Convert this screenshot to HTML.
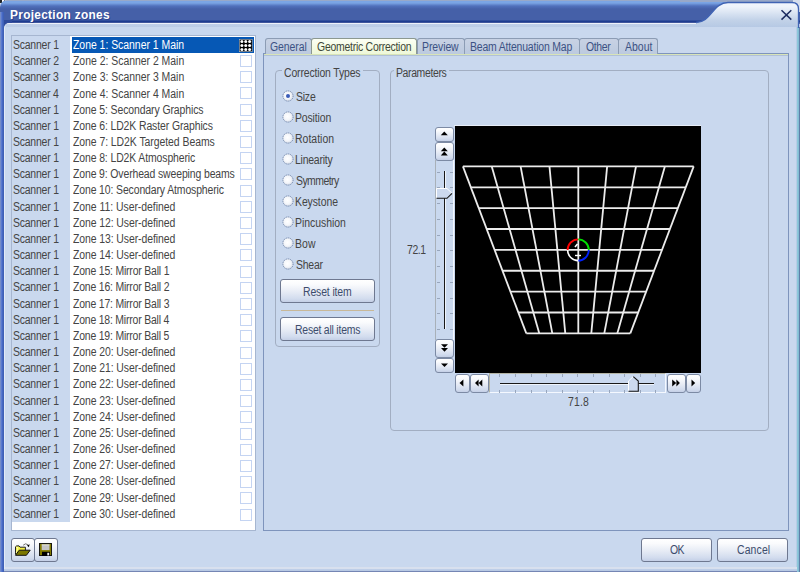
<!DOCTYPE html><html><head><meta charset="utf-8"><style>
*{margin:0;padding:0;box-sizing:border-box}
html,body{width:800px;height:572px;overflow:hidden;background:#c9d8ee}
body{position:relative;font-family:"Liberation Sans",sans-serif;font-size:11px;color:#222}
.a{position:absolute}
.t{position:absolute;white-space:nowrap;font-size:11px;line-height:13px}
.btn{position:absolute;border:1px solid #6e7890;border-radius:3px;background:linear-gradient(#ffffff 0%,#fafbfd 20%,#e6ebf5 55%,#d2dcee 85%,#c4cfe6 100%)}
.tab{position:absolute;top:38px;height:16px;border:1px solid #8c9cb4;border-bottom:none;border-radius:3px 3px 0 0;background:linear-gradient(#c8d2e4,#bccadf)}
.grp{position:absolute;border:1px solid #a2aec2;border-radius:4px}
.chk{position:absolute;width:12px;height:12px;border:1px solid #c4d4f2;background:#fff}
.radio{position:absolute;width:11px;height:11px;border-radius:50%;background:radial-gradient(circle at 65% 65%,#ffffff 0,#eef0f6 45%,#d0d6e2 100%);border:1px dashed #8090b0}
</style></head><body>
<div class="a" style="left:0;top:0;width:10px;height:10px;background:#dce4f2"></div>
<div class="a" style="left:0;top:0;width:1.5px;height:3px;background:#202428"></div>
<div class="a" style="left:1.5px;top:0;width:2px;height:6px;background:#ffffff"></div>
<div class="a" style="left:3.5px;top:0;width:1px;height:2px;background:#505860"></div>
<div class="a" style="left:0;top:0;width:800px;height:24px;background:linear-gradient(#98a8c8 0,#98a8c8 1px,#7aa4e4 1px,#7aa4e4 3px,#5070bc 6px,#4560a8 9px,#4560a8 20px,#1e3c90 21px,#1e3c90 22px,#6070a8 23px);border-top-left-radius:7px"></div>
<div class="a" style="left:0;top:12px;width:4px;height:560px;background:linear-gradient(90deg,#8090b8 0,#6888d8 1px,#4a6cc8 2px,#3a5cb0 4px)"></div>
<div class="a" style="left:4px;top:20px;width:8px;height:8px;background:#2e4a9c"></div>
<div class="a" style="left:4px;top:23px;width:793px;height:546px;background:#c9d8ee;border-top:1px solid #eef2fa;border-left:1px solid #e2eaf6;border-top-left-radius:5px"></div>
<div class="a" style="left:6px;top:24px;width:791px;height:3px;background:linear-gradient(#c0d0ea,#bccde6)"></div>
<div class="t" style="left:9.74px;top:9.07px;color:#fff;font-size:12.5px;font-weight:bold;transform:scaleX(0.9500);transform-origin:0 0;letter-spacing:0.318px;text-shadow:1px 1px 0 rgba(20,40,120,0.5);">Projection zones</div>
<div class="a" style="left:796px;top:27px;width:4px;height:545px;background:linear-gradient(90deg,#b8cce6 0,#b8cce6 1px,#8cc8da 1.5px,#84bcd4 2.5px,#6282aa 3.2px,#5a78a4 4px)"></div>
<div class="a" style="left:5px;top:567px;width:792px;height:2px;background:#d8e0ee"></div>
<div class="a" style="left:4px;top:569px;width:793px;height:3px;background:linear-gradient(#c0d0ea 0,#b8c9e4 1.5px,#8090b8 2px,#6a7cb0 3px)"></div>
<div class="a" style="left:11px;top:35px;width:245px;height:496px;border:1px solid #a6b6d0;background:#fff"></div>
<div class="a" style="left:12px;top:36px;width:58px;height:486px;background:#c9d8ee"></div>
<div class="a" style="left:72px;top:37px;width:182px;height:16px;background:#0658b5"></div>
<div class="t" style="left:13.48px;top:39.05px;color:#444;font-size:12px;font-weight:normal;transform:scaleX(0.8700);transform-origin:0 0;letter-spacing:-0.236px;">Scanner 1</div>
<div class="t" style="left:73.45px;top:39.05px;color:#fff;font-size:12px;font-weight:normal;transform:scaleX(0.8700);transform-origin:0 0;letter-spacing:-0.022px;">Zone 1: Scanner 1 Main</div>
<div class="t" style="left:13.48px;top:55.21px;color:#444;font-size:12px;font-weight:normal;transform:scaleX(0.8700);transform-origin:0 0;letter-spacing:-0.236px;">Scanner 2</div>
<div class="t" style="left:73.45px;top:55.21px;color:#444;font-size:12px;font-weight:normal;transform:scaleX(0.8700);transform-origin:0 0;letter-spacing:-0.011px;">Zone 2: Scanner 2 Main</div>
<div class="chk" style="left:240px;top:55.00px"></div>
<div class="t" style="left:13.48px;top:71.37px;color:#444;font-size:12px;font-weight:normal;transform:scaleX(0.8700);transform-origin:0 0;letter-spacing:-0.249px;">Scanner 3</div>
<div class="t" style="left:73.45px;top:71.37px;color:#444;font-size:12px;font-weight:normal;transform:scaleX(0.8700);transform-origin:0 0;letter-spacing:-0.011px;">Zone 3: Scanner 3 Main</div>
<div class="chk" style="left:240px;top:71.20px"></div>
<div class="t" style="left:13.48px;top:87.53px;color:#444;font-size:12px;font-weight:normal;transform:scaleX(0.8700);transform-origin:0 0;letter-spacing:-0.261px;">Scanner 4</div>
<div class="t" style="left:73.45px;top:87.53px;color:#444;font-size:12px;font-weight:normal;transform:scaleX(0.8700);transform-origin:0 0;letter-spacing:-0.011px;">Zone 4: Scanner 4 Main</div>
<div class="chk" style="left:240px;top:87.40px"></div>
<div class="t" style="left:13.48px;top:103.69px;color:#444;font-size:12px;font-weight:normal;transform:scaleX(0.8700);transform-origin:0 0;letter-spacing:-0.236px;">Scanner 1</div>
<div class="t" style="left:73.45px;top:103.69px;color:#444;font-size:12px;font-weight:normal;transform:scaleX(0.8700);transform-origin:0 0;letter-spacing:-0.108px;">Zone 5: Secondary Graphics</div>
<div class="chk" style="left:240px;top:103.60px"></div>
<div class="t" style="left:13.48px;top:119.85px;color:#444;font-size:12px;font-weight:normal;transform:scaleX(0.8700);transform-origin:0 0;letter-spacing:-0.236px;">Scanner 1</div>
<div class="t" style="left:73.45px;top:119.85px;color:#444;font-size:12px;font-weight:normal;transform:scaleX(0.8700);transform-origin:0 0;letter-spacing:-0.119px;">Zone 6: LD2K Raster Graphics</div>
<div class="chk" style="left:240px;top:119.80px"></div>
<div class="t" style="left:13.48px;top:136.01px;color:#444;font-size:12px;font-weight:normal;transform:scaleX(0.8700);transform-origin:0 0;letter-spacing:-0.236px;">Scanner 1</div>
<div class="t" style="left:73.45px;top:136.01px;color:#444;font-size:12px;font-weight:normal;transform:scaleX(0.8700);transform-origin:0 0;letter-spacing:-0.062px;">Zone 7: LD2K Targeted Beams</div>
<div class="chk" style="left:240px;top:136.00px"></div>
<div class="t" style="left:13.48px;top:152.17px;color:#444;font-size:12px;font-weight:normal;transform:scaleX(0.8700);transform-origin:0 0;letter-spacing:-0.236px;">Scanner 1</div>
<div class="t" style="left:73.45px;top:152.17px;color:#444;font-size:12px;font-weight:normal;transform:scaleX(0.8700);transform-origin:0 0;letter-spacing:-0.123px;">Zone 8: LD2K Atmospheric</div>
<div class="chk" style="left:240px;top:152.20px"></div>
<div class="t" style="left:13.48px;top:168.33px;color:#444;font-size:12px;font-weight:normal;transform:scaleX(0.8700);transform-origin:0 0;letter-spacing:-0.236px;">Scanner 1</div>
<div class="t" style="left:73.45px;top:168.33px;color:#444;font-size:12px;font-weight:normal;transform:scaleX(0.8700);transform-origin:0 0;letter-spacing:-0.138px;">Zone 9: Overhead sweeping beams</div>
<div class="chk" style="left:240px;top:168.40px"></div>
<div class="t" style="left:13.48px;top:184.49px;color:#444;font-size:12px;font-weight:normal;transform:scaleX(0.8700);transform-origin:0 0;letter-spacing:-0.236px;">Scanner 1</div>
<div class="t" style="left:73.45px;top:184.49px;color:#444;font-size:12px;font-weight:normal;transform:scaleX(0.8700);transform-origin:0 0;letter-spacing:-0.132px;">Zone 10: Secondary Atmospheric</div>
<div class="chk" style="left:240px;top:184.60px"></div>
<div class="t" style="left:13.48px;top:200.65px;color:#444;font-size:12px;font-weight:normal;transform:scaleX(0.8700);transform-origin:0 0;letter-spacing:-0.236px;">Scanner 1</div>
<div class="t" style="left:73.45px;top:200.65px;color:#444;font-size:12px;font-weight:normal;transform:scaleX(0.8700);transform-origin:0 0;letter-spacing:-0.049px;">Zone 11: User-defined</div>
<div class="chk" style="left:240px;top:200.80px"></div>
<div class="t" style="left:13.48px;top:216.81px;color:#444;font-size:12px;font-weight:normal;transform:scaleX(0.8700);transform-origin:0 0;letter-spacing:-0.236px;">Scanner 1</div>
<div class="t" style="left:73.45px;top:216.81px;color:#444;font-size:12px;font-weight:normal;transform:scaleX(0.8700);transform-origin:0 0;letter-spacing:-0.094px;">Zone 12: User-defined</div>
<div class="chk" style="left:240px;top:217.00px"></div>
<div class="t" style="left:13.48px;top:232.97px;color:#444;font-size:12px;font-weight:normal;transform:scaleX(0.8700);transform-origin:0 0;letter-spacing:-0.236px;">Scanner 1</div>
<div class="t" style="left:73.45px;top:232.97px;color:#444;font-size:12px;font-weight:normal;transform:scaleX(0.8700);transform-origin:0 0;letter-spacing:-0.094px;">Zone 13: User-defined</div>
<div class="chk" style="left:240px;top:233.20px"></div>
<div class="t" style="left:13.48px;top:249.13px;color:#444;font-size:12px;font-weight:normal;transform:scaleX(0.8700);transform-origin:0 0;letter-spacing:-0.236px;">Scanner 1</div>
<div class="t" style="left:73.45px;top:249.13px;color:#444;font-size:12px;font-weight:normal;transform:scaleX(0.8700);transform-origin:0 0;letter-spacing:-0.094px;">Zone 14: User-defined</div>
<div class="chk" style="left:240px;top:249.40px"></div>
<div class="t" style="left:13.48px;top:265.29px;color:#444;font-size:12px;font-weight:normal;transform:scaleX(0.8700);transform-origin:0 0;letter-spacing:-0.236px;">Scanner 1</div>
<div class="t" style="left:73.45px;top:265.29px;color:#444;font-size:12px;font-weight:normal;transform:scaleX(0.8700);transform-origin:0 0;letter-spacing:-0.215px;">Zone 15: Mirror Ball 1</div>
<div class="chk" style="left:240px;top:265.60px"></div>
<div class="t" style="left:13.48px;top:281.45px;color:#444;font-size:12px;font-weight:normal;transform:scaleX(0.8700);transform-origin:0 0;letter-spacing:-0.236px;">Scanner 1</div>
<div class="t" style="left:73.45px;top:281.45px;color:#444;font-size:12px;font-weight:normal;transform:scaleX(0.8700);transform-origin:0 0;letter-spacing:-0.215px;">Zone 16: Mirror Ball 2</div>
<div class="chk" style="left:240px;top:281.80px"></div>
<div class="t" style="left:13.48px;top:297.61px;color:#444;font-size:12px;font-weight:normal;transform:scaleX(0.8700);transform-origin:0 0;letter-spacing:-0.236px;">Scanner 1</div>
<div class="t" style="left:73.45px;top:297.61px;color:#444;font-size:12px;font-weight:normal;transform:scaleX(0.8700);transform-origin:0 0;letter-spacing:-0.215px;">Zone 17: Mirror Ball 3</div>
<div class="chk" style="left:240px;top:298.00px"></div>
<div class="t" style="left:13.48px;top:313.77px;color:#444;font-size:12px;font-weight:normal;transform:scaleX(0.8700);transform-origin:0 0;letter-spacing:-0.236px;">Scanner 1</div>
<div class="t" style="left:73.45px;top:313.77px;color:#444;font-size:12px;font-weight:normal;transform:scaleX(0.8700);transform-origin:0 0;letter-spacing:-0.225px;">Zone 18: Mirror Ball 4</div>
<div class="chk" style="left:240px;top:314.20px"></div>
<div class="t" style="left:13.48px;top:329.93px;color:#444;font-size:12px;font-weight:normal;transform:scaleX(0.8700);transform-origin:0 0;letter-spacing:-0.236px;">Scanner 1</div>
<div class="t" style="left:73.45px;top:329.93px;color:#444;font-size:12px;font-weight:normal;transform:scaleX(0.8700);transform-origin:0 0;letter-spacing:-0.220px;">Zone 19: Mirror Ball 5</div>
<div class="chk" style="left:240px;top:330.40px"></div>
<div class="t" style="left:13.48px;top:346.09px;color:#444;font-size:12px;font-weight:normal;transform:scaleX(0.8700);transform-origin:0 0;letter-spacing:-0.236px;">Scanner 1</div>
<div class="t" style="left:73.45px;top:346.09px;color:#444;font-size:12px;font-weight:normal;transform:scaleX(0.8700);transform-origin:0 0;letter-spacing:-0.094px;">Zone 20: User-defined</div>
<div class="chk" style="left:240px;top:346.60px"></div>
<div class="t" style="left:13.48px;top:362.25px;color:#444;font-size:12px;font-weight:normal;transform:scaleX(0.8700);transform-origin:0 0;letter-spacing:-0.236px;">Scanner 1</div>
<div class="t" style="left:73.45px;top:362.25px;color:#444;font-size:12px;font-weight:normal;transform:scaleX(0.8700);transform-origin:0 0;letter-spacing:-0.094px;">Zone 21: User-defined</div>
<div class="chk" style="left:240px;top:362.80px"></div>
<div class="t" style="left:13.48px;top:378.41px;color:#444;font-size:12px;font-weight:normal;transform:scaleX(0.8700);transform-origin:0 0;letter-spacing:-0.236px;">Scanner 1</div>
<div class="t" style="left:73.45px;top:378.41px;color:#444;font-size:12px;font-weight:normal;transform:scaleX(0.8700);transform-origin:0 0;letter-spacing:-0.094px;">Zone 22: User-defined</div>
<div class="chk" style="left:240px;top:379.00px"></div>
<div class="t" style="left:13.48px;top:394.57px;color:#444;font-size:12px;font-weight:normal;transform:scaleX(0.8700);transform-origin:0 0;letter-spacing:-0.236px;">Scanner 1</div>
<div class="t" style="left:73.45px;top:394.57px;color:#444;font-size:12px;font-weight:normal;transform:scaleX(0.8700);transform-origin:0 0;letter-spacing:-0.094px;">Zone 23: User-defined</div>
<div class="chk" style="left:240px;top:395.20px"></div>
<div class="t" style="left:13.48px;top:410.73px;color:#444;font-size:12px;font-weight:normal;transform:scaleX(0.8700);transform-origin:0 0;letter-spacing:-0.236px;">Scanner 1</div>
<div class="t" style="left:73.45px;top:410.73px;color:#444;font-size:12px;font-weight:normal;transform:scaleX(0.8700);transform-origin:0 0;letter-spacing:-0.094px;">Zone 24: User-defined</div>
<div class="chk" style="left:240px;top:411.40px"></div>
<div class="t" style="left:13.48px;top:426.89px;color:#444;font-size:12px;font-weight:normal;transform:scaleX(0.8700);transform-origin:0 0;letter-spacing:-0.236px;">Scanner 1</div>
<div class="t" style="left:73.45px;top:426.89px;color:#444;font-size:12px;font-weight:normal;transform:scaleX(0.8700);transform-origin:0 0;letter-spacing:-0.094px;">Zone 25: User-defined</div>
<div class="chk" style="left:240px;top:427.60px"></div>
<div class="t" style="left:13.48px;top:443.05px;color:#444;font-size:12px;font-weight:normal;transform:scaleX(0.8700);transform-origin:0 0;letter-spacing:-0.236px;">Scanner 1</div>
<div class="t" style="left:73.45px;top:443.05px;color:#444;font-size:12px;font-weight:normal;transform:scaleX(0.8700);transform-origin:0 0;letter-spacing:-0.094px;">Zone 26: User-defined</div>
<div class="chk" style="left:240px;top:443.80px"></div>
<div class="t" style="left:13.48px;top:459.21px;color:#444;font-size:12px;font-weight:normal;transform:scaleX(0.8700);transform-origin:0 0;letter-spacing:-0.236px;">Scanner 1</div>
<div class="t" style="left:73.45px;top:459.21px;color:#444;font-size:12px;font-weight:normal;transform:scaleX(0.8700);transform-origin:0 0;letter-spacing:-0.094px;">Zone 27: User-defined</div>
<div class="chk" style="left:240px;top:460.00px"></div>
<div class="t" style="left:13.48px;top:475.37px;color:#444;font-size:12px;font-weight:normal;transform:scaleX(0.8700);transform-origin:0 0;letter-spacing:-0.236px;">Scanner 1</div>
<div class="t" style="left:73.45px;top:475.37px;color:#444;font-size:12px;font-weight:normal;transform:scaleX(0.8700);transform-origin:0 0;letter-spacing:-0.094px;">Zone 28: User-defined</div>
<div class="chk" style="left:240px;top:476.20px"></div>
<div class="t" style="left:13.48px;top:491.53px;color:#444;font-size:12px;font-weight:normal;transform:scaleX(0.8700);transform-origin:0 0;letter-spacing:-0.236px;">Scanner 1</div>
<div class="t" style="left:73.45px;top:491.53px;color:#444;font-size:12px;font-weight:normal;transform:scaleX(0.8700);transform-origin:0 0;letter-spacing:-0.094px;">Zone 29: User-defined</div>
<div class="chk" style="left:240px;top:492.40px"></div>
<div class="t" style="left:13.48px;top:507.69px;color:#444;font-size:12px;font-weight:normal;transform:scaleX(0.8700);transform-origin:0 0;letter-spacing:-0.236px;">Scanner 1</div>
<div class="t" style="left:73.45px;top:507.69px;color:#444;font-size:12px;font-weight:normal;transform:scaleX(0.8700);transform-origin:0 0;letter-spacing:-0.094px;">Zone 30: User-defined</div>
<div class="chk" style="left:240px;top:508.60px"></div>
<svg class="a" style="left:239px;top:38.5px" width="13.5" height="13" viewBox="0 0 13.5 13"><rect x="0.3" y="0.3" width="12.9" height="12.4" fill="#000" stroke="#c0c0c0" stroke-width="0.6"/><circle cx="2.90" cy="2.60" r="1.5" fill="#fff"/><circle cx="6.75" cy="2.60" r="1.5" fill="#fff"/><circle cx="10.60" cy="2.60" r="1.5" fill="#fff"/><circle cx="2.90" cy="6.50" r="1.5" fill="#fff"/><circle cx="6.75" cy="6.50" r="1.5" fill="#fff"/><circle cx="10.60" cy="6.50" r="1.5" fill="#fff"/><circle cx="2.90" cy="10.40" r="1.5" fill="#fff"/><circle cx="6.75" cy="10.40" r="1.5" fill="#fff"/><circle cx="10.60" cy="10.40" r="1.5" fill="#fff"/></svg>
<div class="btn" style="left:11px;top:538px;width:24px;height:24px"></div>
<div class="btn" style="left:34px;top:538px;width:24px;height:24px"></div>
<svg class="a" style="left:13px;top:541px" width="20" height="18" viewBox="0 0 20 18"><path d="M2.5 13.5 V5.8 L3.6 4.9 H6 L7 6.2 H12.4 V9.5" fill="#f4f040" stroke="#202020" stroke-width="1"/><path d="M3.2 6.5 H5 L3.2 12" fill="none" stroke="#ffffc0" stroke-width="0.8"/><path d="M2.5 14.3 L6.2 9.2 H17.2 L13.4 14.3 Z" fill="#7c7800" stroke="#101010" stroke-width="1"/><path d="M10.2 4.2 Q12.5 1.6 15 3.8" fill="none" stroke="#707070" stroke-width="1"/><path d="M14 4.6 L16.6 3.2 L15.9 6.2 Z" fill="#000"/></svg>
<svg class="a" style="left:39px;top:543px" width="13" height="13" viewBox="0 0 13 13"><rect x="0" y="0" width="13" height="13" fill="#181810"/><rect x="1" y="1" width="11" height="11" fill="#847c00"/><rect x="2.7" y="1.5" width="7.8" height="5.6" fill="#c4c4c4"/><rect x="2.7" y="1.5" width="7.8" height="0.8" fill="#e8e8e8"/><rect x="3" y="8.8" width="8" height="4.2" fill="#000"/><rect x="8.3" y="9.8" width="1.9" height="2.6" fill="#f0f0f0"/></svg>
<div class="btn" style="left:641px;top:538px;width:71px;height:24px"></div>
<div class="btn" style="left:717px;top:538px;width:71px;height:24px"></div>
<div class="t" style="left:669.78px;top:543.65px;color:#3c4c6c;font-size:12px;font-weight:normal;transform:scaleX(0.8700);transform-origin:0 0;letter-spacing:-0.853px;">OK</div>
<div class="t" style="left:736.98px;top:543.65px;color:#3c4c6c;font-size:12px;font-weight:normal;transform:scaleX(0.8700);transform-origin:0 0;letter-spacing:0.156px;">Cancel</div>
<div class="a" style="left:263px;top:53px;width:526px;height:478px;border:1px solid #7e94bc"></div>
<div class="a" style="left:264px;top:54px;width:524px;height:1px;background:#d8e4b8"></div>
<div class="a" style="left:264px;top:55px;width:524px;height:1px;background:#b0c0d8"></div>
<div class="tab" style="left:265px;width:47.0px"></div>
<div class="t" style="left:269.98px;top:41.35px;color:#3c5284;font-size:12px;font-weight:normal;transform:scaleX(0.8700);transform-origin:0 0;letter-spacing:-0.083px;">General</div>
<div class="tab" style="left:416.8px;width:48.2px"></div>
<div class="t" style="left:422.13px;top:41.35px;color:#3c5284;font-size:12px;font-weight:normal;transform:scaleX(0.8700);transform-origin:0 0;letter-spacing:-0.092px;">Preview</div>
<div class="tab" style="left:464px;width:115.7px"></div>
<div class="t" style="left:470.13px;top:41.35px;color:#3c5284;font-size:12px;font-weight:normal;transform:scaleX(0.8700);transform-origin:0 0;letter-spacing:-0.207px;">Beam Attenuation Map</div>
<div class="tab" style="left:578.7px;width:40.7px"></div>
<div class="t" style="left:586.28px;top:41.35px;color:#3c5284;font-size:12px;font-weight:normal;transform:scaleX(0.8700);transform-origin:0 0;letter-spacing:-0.432px;">Other</div>
<div class="tab" style="left:618.4px;width:40.0px"></div>
<div class="t" style="left:624.81px;top:41.35px;color:#3c5284;font-size:12px;font-weight:normal;transform:scaleX(0.8700);transform-origin:0 0;letter-spacing:0.045px;">About</div>
<div class="a" style="left:311px;top:38px;width:106px;height:16px;border:1px solid #8c9890;border-bottom:none;border-radius:3px 3px 0 0;background:linear-gradient(#fcfff4,#eef8d8)"></div>
<div class="t" style="left:317.18px;top:41.35px;color:#404838;font-size:12px;font-weight:normal;transform:scaleX(0.8700);transform-origin:0 0;letter-spacing:-0.282px;">Geometric Correction</div>
<div class="grp" style="left:275px;top:70px;width:105px;height:277px"></div>
<div class="a" style="left:282px;top:64px;width:81px;height:12px;background:#c9d8ee"></div>
<div class="t" style="left:284.38px;top:67.05px;color:#444;font-size:12px;font-weight:normal;transform:scaleX(0.8700);transform-origin:0 0;letter-spacing:-0.164px;">Correction Types</div>
<svg class="a" style="left:281.5px;top:90.40px" width="12" height="12" viewBox="0 0 12 12"><defs><radialGradient id="rg0" cx="0.45" cy="0.45" r="0.6"><stop offset="0" stop-color="#ffffff"/><stop offset="0.55" stop-color="#f4f6fa"/><stop offset="1" stop-color="#d4dae6"/></radialGradient></defs><circle cx="6" cy="6" r="5.1" fill="url(#rg0)" stroke="#7084a8" stroke-width="1" stroke-dasharray="1.2 0.9"/></svg>
<div class="t" style="left:295.78px;top:91.25px;color:#444;font-size:12px;font-weight:normal;transform:scaleX(0.8700);transform-origin:0 0;letter-spacing:-0.235px;">Size</div>
<svg class="a" style="left:281.5px;top:111.35px" width="12" height="12" viewBox="0 0 12 12"><defs><radialGradient id="rg1" cx="0.45" cy="0.45" r="0.6"><stop offset="0" stop-color="#ffffff"/><stop offset="0.55" stop-color="#f4f6fa"/><stop offset="1" stop-color="#d4dae6"/></radialGradient></defs><circle cx="6" cy="6" r="5.1" fill="url(#rg1)" stroke="#7084a8" stroke-width="1" stroke-dasharray="1.2 0.9"/></svg>
<div class="t" style="left:295.43px;top:112.20px;color:#444;font-size:12px;font-weight:normal;transform:scaleX(0.8700);transform-origin:0 0;letter-spacing:-0.145px;">Position</div>
<svg class="a" style="left:281.5px;top:132.30px" width="12" height="12" viewBox="0 0 12 12"><defs><radialGradient id="rg2" cx="0.45" cy="0.45" r="0.6"><stop offset="0" stop-color="#ffffff"/><stop offset="0.55" stop-color="#f4f6fa"/><stop offset="1" stop-color="#d4dae6"/></radialGradient></defs><circle cx="6" cy="6" r="5.1" fill="url(#rg2)" stroke="#7084a8" stroke-width="1" stroke-dasharray="1.2 0.9"/></svg>
<div class="t" style="left:295.43px;top:133.15px;color:#444;font-size:12px;font-weight:normal;transform:scaleX(0.8700);transform-origin:0 0;letter-spacing:0.029px;">Rotation</div>
<svg class="a" style="left:281.5px;top:153.25px" width="12" height="12" viewBox="0 0 12 12"><defs><radialGradient id="rg3" cx="0.45" cy="0.45" r="0.6"><stop offset="0" stop-color="#ffffff"/><stop offset="0.55" stop-color="#f4f6fa"/><stop offset="1" stop-color="#d4dae6"/></radialGradient></defs><circle cx="6" cy="6" r="5.1" fill="url(#rg3)" stroke="#7084a8" stroke-width="1" stroke-dasharray="1.2 0.9"/></svg>
<div class="t" style="left:295.43px;top:154.10px;color:#444;font-size:12px;font-weight:normal;transform:scaleX(0.8700);transform-origin:0 0;letter-spacing:-0.265px;">Linearity</div>
<svg class="a" style="left:281.5px;top:174.20px" width="12" height="12" viewBox="0 0 12 12"><defs><radialGradient id="rg4" cx="0.45" cy="0.45" r="0.6"><stop offset="0" stop-color="#ffffff"/><stop offset="0.55" stop-color="#f4f6fa"/><stop offset="1" stop-color="#d4dae6"/></radialGradient></defs><circle cx="6" cy="6" r="5.1" fill="url(#rg4)" stroke="#7084a8" stroke-width="1" stroke-dasharray="1.2 0.9"/></svg>
<div class="t" style="left:295.78px;top:175.05px;color:#444;font-size:12px;font-weight:normal;transform:scaleX(0.8700);transform-origin:0 0;letter-spacing:-0.617px;">Symmetry</div>
<svg class="a" style="left:281.5px;top:195.15px" width="12" height="12" viewBox="0 0 12 12"><defs><radialGradient id="rg5" cx="0.45" cy="0.45" r="0.6"><stop offset="0" stop-color="#ffffff"/><stop offset="0.55" stop-color="#f4f6fa"/><stop offset="1" stop-color="#d4dae6"/></radialGradient></defs><circle cx="6" cy="6" r="5.1" fill="url(#rg5)" stroke="#7084a8" stroke-width="1" stroke-dasharray="1.2 0.9"/></svg>
<div class="t" style="left:295.43px;top:196.00px;color:#444;font-size:12px;font-weight:normal;transform:scaleX(0.8700);transform-origin:0 0;letter-spacing:-0.098px;">Keystone</div>
<svg class="a" style="left:281.5px;top:216.10px" width="12" height="12" viewBox="0 0 12 12"><defs><radialGradient id="rg6" cx="0.45" cy="0.45" r="0.6"><stop offset="0" stop-color="#ffffff"/><stop offset="0.55" stop-color="#f4f6fa"/><stop offset="1" stop-color="#d4dae6"/></radialGradient></defs><circle cx="6" cy="6" r="5.1" fill="url(#rg6)" stroke="#7084a8" stroke-width="1" stroke-dasharray="1.2 0.9"/></svg>
<div class="t" style="left:295.43px;top:216.95px;color:#444;font-size:12px;font-weight:normal;transform:scaleX(0.8700);transform-origin:0 0;letter-spacing:-0.039px;">Pincushion</div>
<svg class="a" style="left:281.5px;top:237.05px" width="12" height="12" viewBox="0 0 12 12"><defs><radialGradient id="rg7" cx="0.45" cy="0.45" r="0.6"><stop offset="0" stop-color="#ffffff"/><stop offset="0.55" stop-color="#f4f6fa"/><stop offset="1" stop-color="#d4dae6"/></radialGradient></defs><circle cx="6" cy="6" r="5.1" fill="url(#rg7)" stroke="#7084a8" stroke-width="1" stroke-dasharray="1.2 0.9"/></svg>
<div class="t" style="left:295.43px;top:237.90px;color:#444;font-size:12px;font-weight:normal;transform:scaleX(0.8700);transform-origin:0 0;letter-spacing:0.122px;">Bow</div>
<svg class="a" style="left:281.5px;top:258.00px" width="12" height="12" viewBox="0 0 12 12"><defs><radialGradient id="rg8" cx="0.45" cy="0.45" r="0.6"><stop offset="0" stop-color="#ffffff"/><stop offset="0.55" stop-color="#f4f6fa"/><stop offset="1" stop-color="#d4dae6"/></radialGradient></defs><circle cx="6" cy="6" r="5.1" fill="url(#rg8)" stroke="#7084a8" stroke-width="1" stroke-dasharray="1.2 0.9"/></svg>
<div class="t" style="left:295.78px;top:258.85px;color:#444;font-size:12px;font-weight:normal;transform:scaleX(0.8700);transform-origin:0 0;letter-spacing:-0.243px;">Shear</div>
<div class="a" style="left:285.7px;top:94.4px;width:4px;height:4px;border-radius:50%;background:#3a5cb8"></div>
<div class="btn" style="left:280px;top:279px;width:95px;height:24px"></div>
<div class="t" style="left:303.23px;top:285.65px;color:#3c4c6c;font-size:12px;font-weight:normal;transform:scaleX(0.8700);transform-origin:0 0;letter-spacing:-0.150px;">Reset item</div>
<div class="a" style="left:281px;top:309.5px;width:93px;height:1px;background:#c8b898"></div>
<div class="btn" style="left:280px;top:317px;width:95px;height:24px"></div>
<div class="t" style="left:295.03px;top:323.65px;color:#3c4c6c;font-size:12px;font-weight:normal;transform:scaleX(0.8700);transform-origin:0 0;letter-spacing:-0.250px;">Reset all items</div>
<div class="grp" style="left:390px;top:70px;width:379px;height:361px"></div>
<div class="a" style="left:394px;top:64px;width:55px;height:12px;background:#c9d8ee"></div>
<div class="t" style="left:395.63px;top:67.05px;color:#444;font-size:12px;font-weight:normal;transform:scaleX(0.8700);transform-origin:0 0;letter-spacing:-0.411px;">Parameters</div>
<div class="a" style="left:454px;top:125px;width:247px;height:1px;background:#e8eef8"></div>
<div class="a" style="left:455px;top:126px;width:246px;height:247px;background:#000"></div>
<div class="a" style="left:435px;top:160px;width:19px;height:180px;background:#c9d8ee;border-left:1px solid #a8b0b8;border-right:1px solid #f4f8ff"></div>
<div class="a" style="left:444px;top:171px;width:1px;height:158px;background:#181818"></div>
<div class="a" style="left:445px;top:171px;width:1px;height:158px;background:#eef4fc"></div>
<div class="a" style="left:436.5px;top:171.5px;width:3px;height:1px;background:#98a6bc"></div>
<div class="a" style="left:450px;top:171.5px;width:3px;height:1px;background:#98a6bc"></div>
<div class="a" style="left:436.5px;top:187.2px;width:3px;height:1px;background:#98a6bc"></div>
<div class="a" style="left:450px;top:187.2px;width:3px;height:1px;background:#98a6bc"></div>
<div class="a" style="left:436.5px;top:203.0px;width:3px;height:1px;background:#98a6bc"></div>
<div class="a" style="left:450px;top:203.0px;width:3px;height:1px;background:#98a6bc"></div>
<div class="a" style="left:436.5px;top:218.8px;width:3px;height:1px;background:#98a6bc"></div>
<div class="a" style="left:450px;top:218.8px;width:3px;height:1px;background:#98a6bc"></div>
<div class="a" style="left:436.5px;top:234.5px;width:3px;height:1px;background:#98a6bc"></div>
<div class="a" style="left:450px;top:234.5px;width:3px;height:1px;background:#98a6bc"></div>
<div class="a" style="left:436.5px;top:250.2px;width:3px;height:1px;background:#98a6bc"></div>
<div class="a" style="left:450px;top:250.2px;width:3px;height:1px;background:#98a6bc"></div>
<div class="a" style="left:436.5px;top:266.0px;width:3px;height:1px;background:#98a6bc"></div>
<div class="a" style="left:450px;top:266.0px;width:3px;height:1px;background:#98a6bc"></div>
<div class="a" style="left:436.5px;top:281.8px;width:3px;height:1px;background:#98a6bc"></div>
<div class="a" style="left:450px;top:281.8px;width:3px;height:1px;background:#98a6bc"></div>
<div class="a" style="left:436.5px;top:297.5px;width:3px;height:1px;background:#98a6bc"></div>
<div class="a" style="left:450px;top:297.5px;width:3px;height:1px;background:#98a6bc"></div>
<div class="a" style="left:436.5px;top:313.2px;width:3px;height:1px;background:#98a6bc"></div>
<div class="a" style="left:450px;top:313.2px;width:3px;height:1px;background:#98a6bc"></div>
<div class="a" style="left:436.5px;top:329.0px;width:3px;height:1px;background:#98a6bc"></div>
<div class="a" style="left:450px;top:329.0px;width:3px;height:1px;background:#98a6bc"></div>
<svg class="a" style="left:436px;top:188px" width="18" height="12" viewBox="0 0 18 12"><path d="M0.5 0.5 H11 L16 5.3 L11 10.3 H0.5 Z" fill="#ccd9ee"/><path d="M0.5 10.3 V0.5 H11 L16 5.3" fill="none" stroke="#ffffff" stroke-width="1"/><path d="M16 5.3 L11 10.3 H0.5" fill="none" stroke="#151515" stroke-width="1.1"/></svg>
<div class="btn" style="left:435px;top:126.5px;width:19px;height:15px;border-color:#7c8aa4"></div>
<div class="btn" style="left:435px;top:141.5px;width:19px;height:19px;border-color:#7c8aa4"></div>
<div class="btn" style="left:435px;top:339px;width:19px;height:18.5px;border-color:#7c8aa4"></div>
<div class="btn" style="left:435px;top:358px;width:19px;height:14.5px;border-color:#7c8aa4"></div>
<svg class="a" style="left:435px;top:126px" width="19" height="248" viewBox="0 0 19 248"><path d="M5.8 9.2 L12.8 9.2 L9.3 5.5 Z" fill="#000"/><path d="M5.8 25.2 L12.8 25.2 L9.3 21.5 Z M5.8 29.4 L12.8 29.4 L9.3 25.6 Z" fill="#000"/><path d="M6 218.3 L13 218.3 L9.5 221.8 Z M6 222.1 L13 222.1 L9.5 225.8 Z" fill="#000"/><path d="M6 237.5 L13 237.5 L9.5 241 Z" fill="#000"/></svg>
<div class="a" style="left:489px;top:373px;width:177px;height:20px;background:#c9d8ee;border-top:1px solid #b4b4a4;border-left:1px solid #b4b4a4;border-bottom:1px solid #f4f8ff;border-right:1px solid #f4f8ff"></div>
<div class="a" style="left:500px;top:383px;width:154px;height:1px;background:#181818"></div>
<div class="a" style="left:500px;top:384px;width:154px;height:1px;background:#eef4fc"></div>
<div class="a" style="left:499.3px;top:374px;width:1px;height:3px;background:#98a6bc"></div>
<div class="a" style="left:499.3px;top:389.5px;width:1px;height:3px;background:#98a6bc"></div>
<div class="a" style="left:514.9px;top:374px;width:1px;height:3px;background:#98a6bc"></div>
<div class="a" style="left:514.9px;top:389.5px;width:1px;height:3px;background:#98a6bc"></div>
<div class="a" style="left:530.5px;top:374px;width:1px;height:3px;background:#98a6bc"></div>
<div class="a" style="left:530.5px;top:389.5px;width:1px;height:3px;background:#98a6bc"></div>
<div class="a" style="left:546.1px;top:374px;width:1px;height:3px;background:#98a6bc"></div>
<div class="a" style="left:546.1px;top:389.5px;width:1px;height:3px;background:#98a6bc"></div>
<div class="a" style="left:561.7px;top:374px;width:1px;height:3px;background:#98a6bc"></div>
<div class="a" style="left:561.7px;top:389.5px;width:1px;height:3px;background:#98a6bc"></div>
<div class="a" style="left:577.3px;top:374px;width:1px;height:3px;background:#98a6bc"></div>
<div class="a" style="left:577.3px;top:389.5px;width:1px;height:3px;background:#98a6bc"></div>
<div class="a" style="left:592.9px;top:374px;width:1px;height:3px;background:#98a6bc"></div>
<div class="a" style="left:592.9px;top:389.5px;width:1px;height:3px;background:#98a6bc"></div>
<div class="a" style="left:608.5px;top:374px;width:1px;height:3px;background:#98a6bc"></div>
<div class="a" style="left:608.5px;top:389.5px;width:1px;height:3px;background:#98a6bc"></div>
<div class="a" style="left:624.1px;top:374px;width:1px;height:3px;background:#98a6bc"></div>
<div class="a" style="left:624.1px;top:389.5px;width:1px;height:3px;background:#98a6bc"></div>
<div class="a" style="left:639.7px;top:374px;width:1px;height:3px;background:#98a6bc"></div>
<div class="a" style="left:639.7px;top:389.5px;width:1px;height:3px;background:#98a6bc"></div>
<div class="a" style="left:655.3px;top:374px;width:1px;height:3px;background:#98a6bc"></div>
<div class="a" style="left:655.3px;top:389.5px;width:1px;height:3px;background:#98a6bc"></div>
<svg class="a" style="left:627.5px;top:376px" width="12" height="17" viewBox="0 0 12 17"><path d="M0.5 15.3 V5 L5.3 0.6 L10.3 5 V15.3 Z" fill="#ccd9ee"/><path d="M0.5 15.3 V5 L5.3 0.6" fill="none" stroke="#ffffff" stroke-width="1"/><path d="M5.3 0.6 L10.3 5 V15.3 H0.5" fill="none" stroke="#151515" stroke-width="1.1"/></svg>
<div class="btn" style="left:455px;top:374px;width:15px;height:19px;border-color:#7c8aa4"></div>
<div class="btn" style="left:470px;top:374px;width:19px;height:19px;border-color:#7c8aa4"></div>
<div class="btn" style="left:667px;top:374px;width:19px;height:19px;border-color:#7c8aa4"></div>
<div class="btn" style="left:686px;top:374px;width:15px;height:19px;border-color:#7c8aa4"></div>
<svg class="a" style="left:455px;top:374px" width="246" height="19" viewBox="0 0 246 19"><path d="M8.4 5.6 V12.4 L4.5 9 Z" fill="#000"/><path d="M23.6 5.6 V12.4 L20 9 Z M27.3 5.6 V12.4 L23.7 9 Z" fill="#000"/><path d="M217.2 5.6 V12.4 L221.2 9 Z M221.4 5.6 V12.4 L224.9 9 Z" fill="#000"/><path d="M236.5 5.6 V12.4 L240.2 9 Z" fill="#000"/></svg>
<div class="t" style="left:407.28px;top:243.85px;color:#444;font-size:12px;font-weight:normal;transform:scaleX(0.8700);transform-origin:0 0;letter-spacing:-0.465px;">72.1</div>
<div class="t" style="left:568.08px;top:396.45px;color:#444;font-size:12px;font-weight:normal;transform:scaleX(0.8700);transform-origin:0 0;letter-spacing:0.225px;">71.8</div>
<svg class="a" style="left:455px;top:126px" width="246" height="247" viewBox="455 126 246 247"><line x1="462.90" y1="166.40" x2="693.70" y2="166.40" stroke="#ececec" stroke-width="1.8"/><line x1="470.82" y1="187.28" x2="685.78" y2="187.28" stroke="#ececec" stroke-width="1.8"/><line x1="478.75" y1="208.15" x2="677.85" y2="208.15" stroke="#ececec" stroke-width="1.8"/><line x1="486.67" y1="229.02" x2="669.92" y2="229.02" stroke="#ececec" stroke-width="1.8"/><line x1="494.60" y1="249.90" x2="662.00" y2="249.90" stroke="#ececec" stroke-width="1.8"/><line x1="502.52" y1="270.77" x2="654.08" y2="270.77" stroke="#ececec" stroke-width="1.8"/><line x1="510.45" y1="291.65" x2="646.15" y2="291.65" stroke="#ececec" stroke-width="1.8"/><line x1="518.38" y1="312.52" x2="638.22" y2="312.52" stroke="#ececec" stroke-width="1.8"/><line x1="526.30" y1="333.40" x2="630.30" y2="333.40" stroke="#ececec" stroke-width="1.8"/><line x1="462.90" y1="166.40" x2="526.30" y2="333.40" stroke="#ececec" stroke-width="1.8"/><line x1="491.75" y1="166.40" x2="539.30" y2="333.40" stroke="#ececec" stroke-width="1.8"/><line x1="520.60" y1="166.40" x2="552.30" y2="333.40" stroke="#ececec" stroke-width="1.8"/><line x1="549.45" y1="166.40" x2="565.30" y2="333.40" stroke="#ececec" stroke-width="1.8"/><line x1="578.30" y1="166.40" x2="578.30" y2="333.40" stroke="#ececec" stroke-width="1.8"/><line x1="607.15" y1="166.40" x2="591.30" y2="333.40" stroke="#ececec" stroke-width="1.8"/><line x1="636.00" y1="166.40" x2="604.30" y2="333.40" stroke="#ececec" stroke-width="1.8"/><line x1="664.85" y1="166.40" x2="617.30" y2="333.40" stroke="#ececec" stroke-width="1.8"/><line x1="693.70" y1="166.40" x2="630.30" y2="333.40" stroke="#ececec" stroke-width="1.8"/><path d="M567.6 250.0 A10.6 10.6 0 0 1 578.2 239.4" stroke="#ff0000" stroke-width="1.8" fill="none"/><path d="M578.2 239.4 A10.6 10.6 0 0 1 588.8000000000001 250.0" stroke="#00e000" stroke-width="1.8" fill="none"/><path d="M588.8000000000001 250.0 A10.6 10.6 0 0 1 578.2 260.6" stroke="#0020ff" stroke-width="1.8" fill="none"/><path d="M578.2 260.6 A10.6 10.6 0 0 1 567.6 250.0" stroke="#ffffff" stroke-width="1.6" fill="none"/><path d="M575 247 L577.5 244" stroke="#fff" stroke-width="1.6"/><path d="M575 255.5 H581" stroke="#fff" stroke-width="1.4"/></svg>
<svg class="a" style="left:680px;top:0" width="120" height="28" viewBox="0 0 120 28"><defs><linearGradient id="lg" x1="0" y1="0" x2="0" y2="1"><stop offset="0" stop-color="#f2f6fc"/><stop offset="0.18" stop-color="#eef3fb"/><stop offset="0.72" stop-color="#c2d2e8"/><stop offset="1" stop-color="#b6c9e4"/></linearGradient></defs><rect x="110" y="0" width="10" height="12" fill="#d6deec"/><rect x="0" y="0" width="113" height="2" fill="#98a8c8"/><path d="M0 27 L0 24 L16 24 L16 22.5 C31 22.5 33 2.5 48 2.5 L112 2.5 Q118.5 2.5 118.5 9 L118.5 27 Z" fill="url(#lg)"/><path d="M16 22.5 C31 22.5 33 2.5 48 2.5 L112 2.5 Q118.5 2.5 118.5 9 L118.5 28" fill="none" stroke="#4064b4" stroke-width="1.3"/><path d="M101.5 10.2 L111.3 19.6 M111.3 10.2 L101.5 19.6" stroke="#1c2c60" stroke-width="1.5"/></svg>
</body></html>
